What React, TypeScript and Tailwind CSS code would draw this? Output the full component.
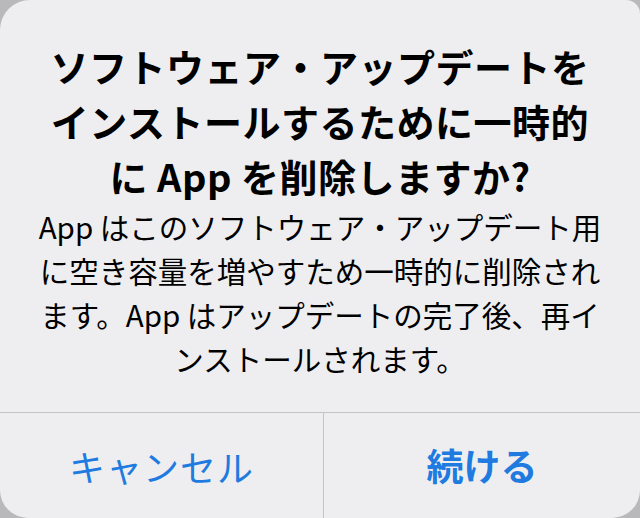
export default function App() {
  const jp = { fontFamily: '"Noto Sans CJK JP", "Noto Sans", sans-serif' }

  return (
    <div className="w-[640px] h-[518px] overflow-hidden bg-[#b9b9bc]" style={jp}>
      {/* Alert card */}
      <div className="flex flex-col h-full bg-[#eeeef0] rounded-tl-[30px] rounded-tr-[14px] rounded-bl-[28px] rounded-br-[28px]">
        <div className="flex-1 flex flex-col items-center px-[30px] pt-[38px] text-center text-black">
          <h1 className="text-[38px] leading-[55px] font-bold tracking-[0.5px]">
            ソフトウェア・アップデートを
            <br />
            インストールするために一時的
            <br />
            に App を削除しますか?
          </h1>
          <p className="text-[29.5px] leading-[44px] mt-[1px]">
            App はこのソフトウェア・アップデート用
            <br />
            に空き容量を増やすため一時的に削除され
            <br />
            ます。App はアップデートの完了後、再イ
            <br />
            ンストールされます。
          </p>
        </div>

        {/* Buttons */}
        <div className="flex h-[106px] border-t border-[#c4c4c7] text-[#1f7be0]">
          <button className="w-[323px] flex items-center justify-center pt-[1px] text-[36px] tracking-[1px]">
            キャンセル
          </button>
          <div className="w-px bg-[#c4c4c7]" />
          <button className="flex-1 flex items-center justify-center pt-[1px] text-[37px] font-bold">続ける</button>
        </div>
      </div>
    </div>
  )
}
